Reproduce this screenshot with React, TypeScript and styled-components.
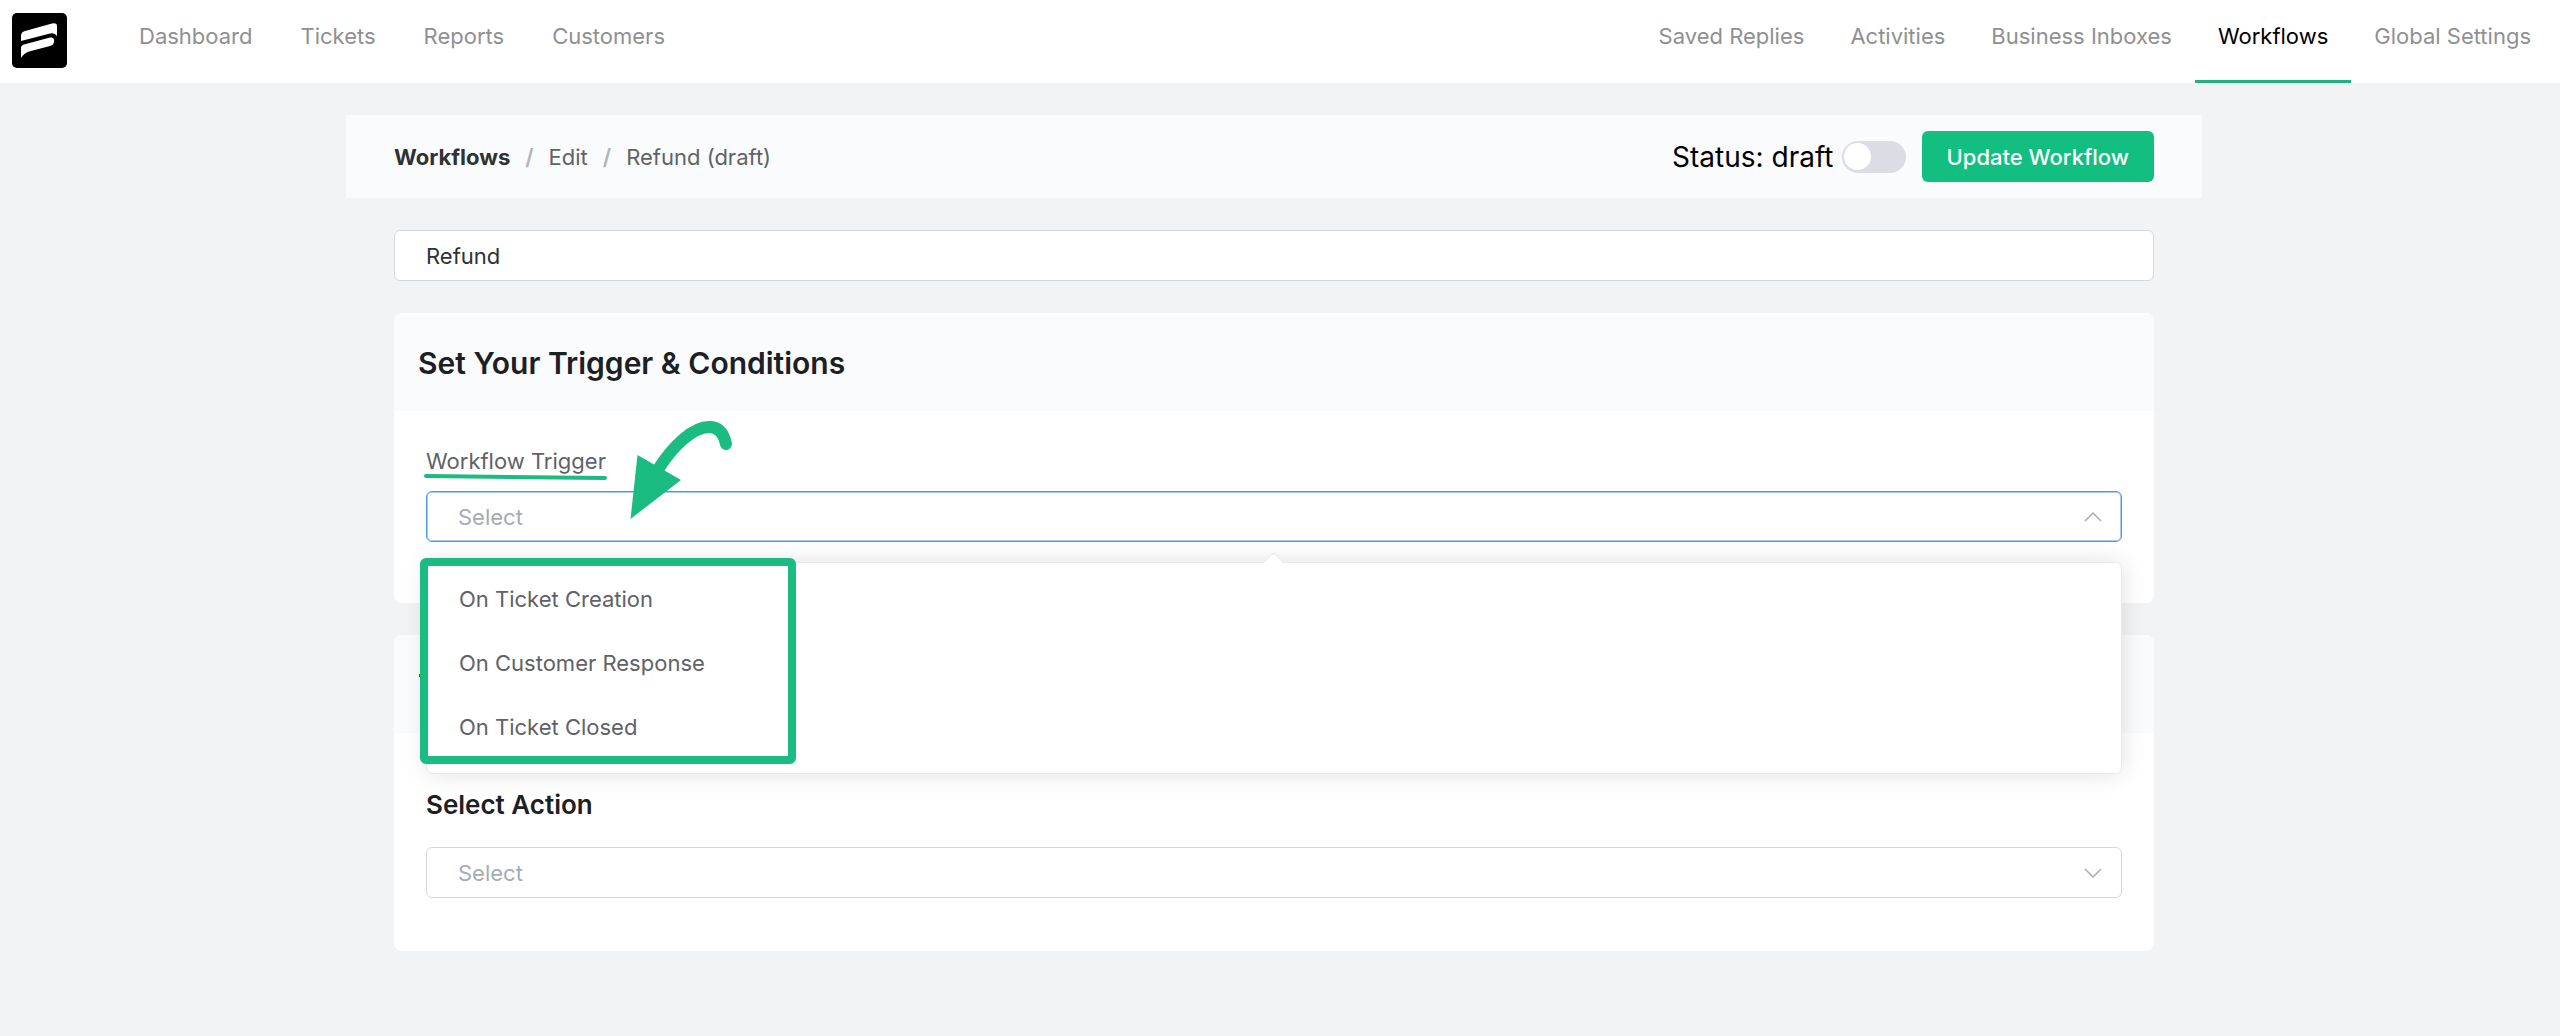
import React, { useId, useState } from "react";
import styled, { createGlobalStyle } from "styled-components";

const GlobalStyle = createGlobalStyle`
  *, *::before, *::after { box-sizing: border-box; }
  body {
    margin: 0;
    min-height: 100vh;
    background: #f1f3f5;
    color: #1d2023;
    font-family: Inter, "Liberation Sans", Arial, sans-serif;
    font-size: 22px;
    line-height: 28px;
  }
  h1, h2, h3, ul, ol { margin: 0; padding: 0; }
  ul, ol { list-style: none; }
  a { color: inherit; text-decoration: none; }
`;

const TopBar = styled.header`
  display: flex;
  align-items: stretch;
  height: 83px;
  padding: 0 6px 0 12px;
  background: #fff;
`;

const LogoLink = styled.a`
  display: block;
  height: 55px;
  margin: 13px 48px 0 0;
  svg { display: block; }
`;

const MenuLink = styled.a<{ $active?: boolean }>`
  padding: 22px 24px 0;
  color: ${(p) => (p.$active ? "#000" : "#8f9092")};
  border-bottom: 3px solid ${(p) => (p.$active ? "#22b183" : "transparent")};
  white-space: nowrap;
`;

const Menu = styled.nav<{ $end?: boolean }>`
  display: flex;
  margin-left: ${(p) => (p.$end ? "auto" : "0")};
  ${MenuLink} {
    padding-left: ${(p) => (p.$end ? "23px" : "24px")};
    padding-right: ${(p) => (p.$end ? "23px" : "24px")};
  }
`;

const Page = styled.main`
  padding: 32px 12px 0 0;
`;

const Workspace = styled.div`
  max-width: 1856px;
  margin: 0 auto;
`;

const ActionBar = styled.div`
  display: flex;
  align-items: center;
  justify-content: space-between;
  min-height: 83px;
  padding: 0 48px;
  background: #fafbfd;
`;

const Crumbs = styled.ol`
  display: flex;
  color: #606266;
`;

const Crumb = styled.li<{ $strong?: boolean }>`
  font-weight: ${(p) => (p.$strong ? 700 : 400)};
  color: ${(p) => (p.$strong ? "#303133" : "#606266")};
  &:not(:last-child)::after {
    content: "/";
    margin: 0 15px;
    font-weight: 600;
    color: #b0b3b8;
  }
`;

const Controls = styled.div`
  display: flex;
  align-items: center;
`;

const StatusLabel = styled.label`
  display: flex;
  align-items: center;
  gap: 8px;
  margin-right: 16px;
  color: #000;
  font-size: 28px;
  line-height: 32px;
`;

const Switch = styled.input`
  appearance: none;
  display: flex;
  align-items: center;
  width: 64px;
  height: 32px;
  margin: 0;
  padding: 0 2px;
  border-radius: 16px;
  background: #dcdce4;
  &::before {
    content: "";
    width: 27px;
    height: 27px;
    border-radius: 50%;
    background: #fff;
  }
  &:checked { background: #13bf80; justify-content: flex-end; }
`;

const PrimaryButton = styled.button`
  height: 51px;
  padding: 0 25px;
  border: 0;
  border-radius: 6px;
  background: #13bf80;
  color: #fff;
  font: inherit;
  font-weight: 500;
`;

const Content = styled.div`
  display: flex;
  flex-direction: column;
  gap: 32px;
  padding: 32px 48px;
`;

const TitleInput = styled.input`
  width: 100%;
  height: 51px;
  padding: 0 31px;
  border: 1px solid #d6d8dc;
  border-radius: 6px;
  background: #fff;
  color: #303133;
  font: inherit;
`;

const Card = styled.section`
  border-radius: 8px;
  background: #fff;
`;

const CardHead = styled.div`
  padding: 32px 24px 30px;
  border-radius: 8px 8px 0 0;
  background: #fafbfd;
`;

const CardTitle = styled.h2`
  font-size: 30px;
  line-height: 36px;
  font-weight: 600;
`;

const CardBody = styled.div<{ $roomy?: boolean }>`
  padding: ${(p) => (p.$roomy ? "56px 32px 53px" : "32px 32px 61px")};
`;

const Field = styled.div`
  position: relative;
  display: flex;
  flex-direction: column;
`;

const FieldLabel = styled.label`
  align-self: flex-start;
  margin: 4px 0 16px;
  color: #606266;
`;

const FieldHeading = styled.label`
  align-self: flex-start;
  margin-bottom: 26px;
  font-size: 26px;
  line-height: 32px;
  font-weight: 600;
`;

const Underline = styled.svg`
  position: absolute;
  top: 30px;
  left: -2px;
`;

const ArrowMark = styled.svg`
  position: absolute;
  z-index: 3;
  top: -24px;
  left: 200px;
`;

const SelectWrap = styled.div`
  position: relative;
  display: grid;
  align-items: center;
`;

const SelectBox = styled.select<{ $open?: boolean }>`
  appearance: none;
  grid-area: 1 / 1;
  width: 100%;
  height: 51px;
  padding: 0 64px 0 31px;
  border: 1px solid ${(p) => (p.$open ? "#4c96e6" : "#d6d8dc")};
  border-radius: 6px;
  outline: 0;
  background: #fff;
  box-shadow: ${(p) => (p.$open ? "inset 0 0 0 1px #a6cdfa" : "none")};
  color: #a8abb2;
  font: inherit;
`;

const Chevron = styled.svg<{ $up?: boolean }>`
  grid-area: 1 / 1;
  justify-self: end;
  margin-right: 20px;
  pointer-events: none;
  transform: ${(p) => (p.$up ? "rotate(180deg)" : "none")};
`;

const Popup = styled.div`
  position: absolute;
  z-index: 2;
  top: 100%;
  left: 0;
  right: 0;
  margin-top: 20px;
  padding: 4px 0 14px;
  border: 1px solid #e6e8eb;
  border-radius: 6px;
  background: #fff;
  box-shadow: 0 0 24px rgba(0, 0, 0, 0.12);
  &::before {
    content: "";
    position: absolute;
    top: -8px;
    left: 50%;
    width: 15px;
    height: 15px;
    margin-left: -8px;
    border: 1px solid #e6e8eb;
    border-width: 1px 0 0 1px;
    border-radius: 3px 0 0 0;
    background: #fff;
    transform: rotate(45deg);
  }
`;

const Option = styled.li`
  padding: 0 32px;
  color: #606266;
  line-height: 64px;
`;

const Highlight = styled.div`
  position: absolute;
  top: -5px;
  left: -7px;
  width: 376px;
  height: 206px;
  border: 8px solid #1abc81;
  border-radius: 6px;
  pointer-events: none;
`;

const Logo = () => (
  <svg width="55" height="55" viewBox="0 0 55 55" aria-hidden="true">
    <rect width="55" height="55" rx="5" fill="#000" />
    <path
      fill="#fff"
      d="M9 28V23Q9 19 13 18L40 10.500Q45 9.500 45 13V23Q43 19.500 38 20.500Z"
    />
    <path
      fill="#fff"
      d="M9 45V35Q9 32.500 12 31.500L38 24.500Q42 24 42 27V28.500Q42 32 38 33L17 38.500Q12 40 9 45Z"
    />
  </svg>
);

const Arrow = ({ up }: { up?: boolean }) => (
  <Chevron $up={up} width="18" height="18" viewBox="0 0 18 18" fill="none" aria-hidden="true">
    <path d="M1 5L9 13L17 5" stroke="#a8abb2" strokeWidth="1.5" />
  </Chevron>
);

const triggers = ["On Ticket Creation", "On Customer Response", "On Ticket Closed"];

export default function App() {
  const triggerId = useId();
  const actionId = useId();
  const [name, setName] = useState("Refund");
  const [published, setPublished] = useState(false);

  return (
    <>
      <GlobalStyle />
      <TopBar>
        <LogoLink href="#" aria-label="Home">
          <Logo />
        </LogoLink>
        <Menu>
          {["Dashboard", "Tickets", "Reports", "Customers"].map((item) => (
            <MenuLink key={item} href="#">{item}</MenuLink>
          ))}
        </Menu>
        <Menu $end>
          {["Saved Replies", "Activities", "Business Inboxes", "Workflows", "Global Settings"].map((item) => (
            <MenuLink key={item} href="#" $active={item === "Workflows"}>{item}</MenuLink>
          ))}
        </Menu>
      </TopBar>
      <Page>
        <Workspace>
          <ActionBar>
            <Crumbs>
              <Crumb $strong><a href="#">Workflows</a></Crumb>
              <Crumb>Edit</Crumb>
              <Crumb>Refund (draft)</Crumb>
            </Crumbs>
            <Controls>
              <StatusLabel>
                Status: draft
                <Switch
                  type="checkbox"
                  role="switch"
                  checked={published}
                  onChange={(e) => setPublished(e.target.checked)}
                />
              </StatusLabel>
              <PrimaryButton type="button">Update Workflow</PrimaryButton>
            </Controls>
          </ActionBar>
          <Content>
            <TitleInput
              aria-label="Workflow name"
              value={name}
              onChange={(e) => setName(e.target.value)}
            />
            <Card>
              <CardHead>
                <CardTitle>Set Your Trigger &amp; Conditions</CardTitle>
              </CardHead>
              <CardBody>
                <Field>
                  <FieldLabel htmlFor={triggerId}>Workflow Trigger</FieldLabel>
                  <Underline width="184" height="8" viewBox="0 0 184 8" aria-hidden="true">
                    <path d="M2 3L181 5" stroke="#1abc81" strokeWidth="4" strokeLinecap="round" />
                  </Underline>
                  <SelectWrap>
                    <SelectBox id={triggerId} $open defaultValue="">
                      <option value="">Select</option>
                    </SelectBox>
                    <Arrow up />
                    <Popup>
                      <ul role="listbox" aria-label="Workflow Trigger">
                        {triggers.map((t) => (
                          <Option key={t} role="option" aria-selected={false}>{t}</Option>
                        ))}
                      </ul>
                      <Highlight />
                    </Popup>
                  </SelectWrap>
                  <ArrowMark width="110" height="104" viewBox="0 0 110 104" fill="none" aria-hidden="true">
                    <path
                      d="M33 49C47 27 67 8 83 8C93 8 98 15 100 25"
                      stroke="#1abc81"
                      strokeWidth="12"
                      strokeLinecap="round"
                    />
                    <path d="M11.500 36L55 61L4.500 100Z" fill="#1abc81" />
                  </ArrowMark>
                </Field>
              </CardBody>
            </Card>
            <Card>
              <CardHead>
                <CardTitle>Then</CardTitle>
              </CardHead>
              <CardBody $roomy>
                <Field>
                  <FieldHeading htmlFor={actionId}>Select Action</FieldHeading>
                  <SelectWrap>
                    <SelectBox id={actionId} defaultValue="">
                      <option value="">Select</option>
                    </SelectBox>
                    <Arrow />
                  </SelectWrap>
                </Field>
              </CardBody>
            </Card>
          </Content>
        </Workspace>
      </Page>
    </>
  );
}
